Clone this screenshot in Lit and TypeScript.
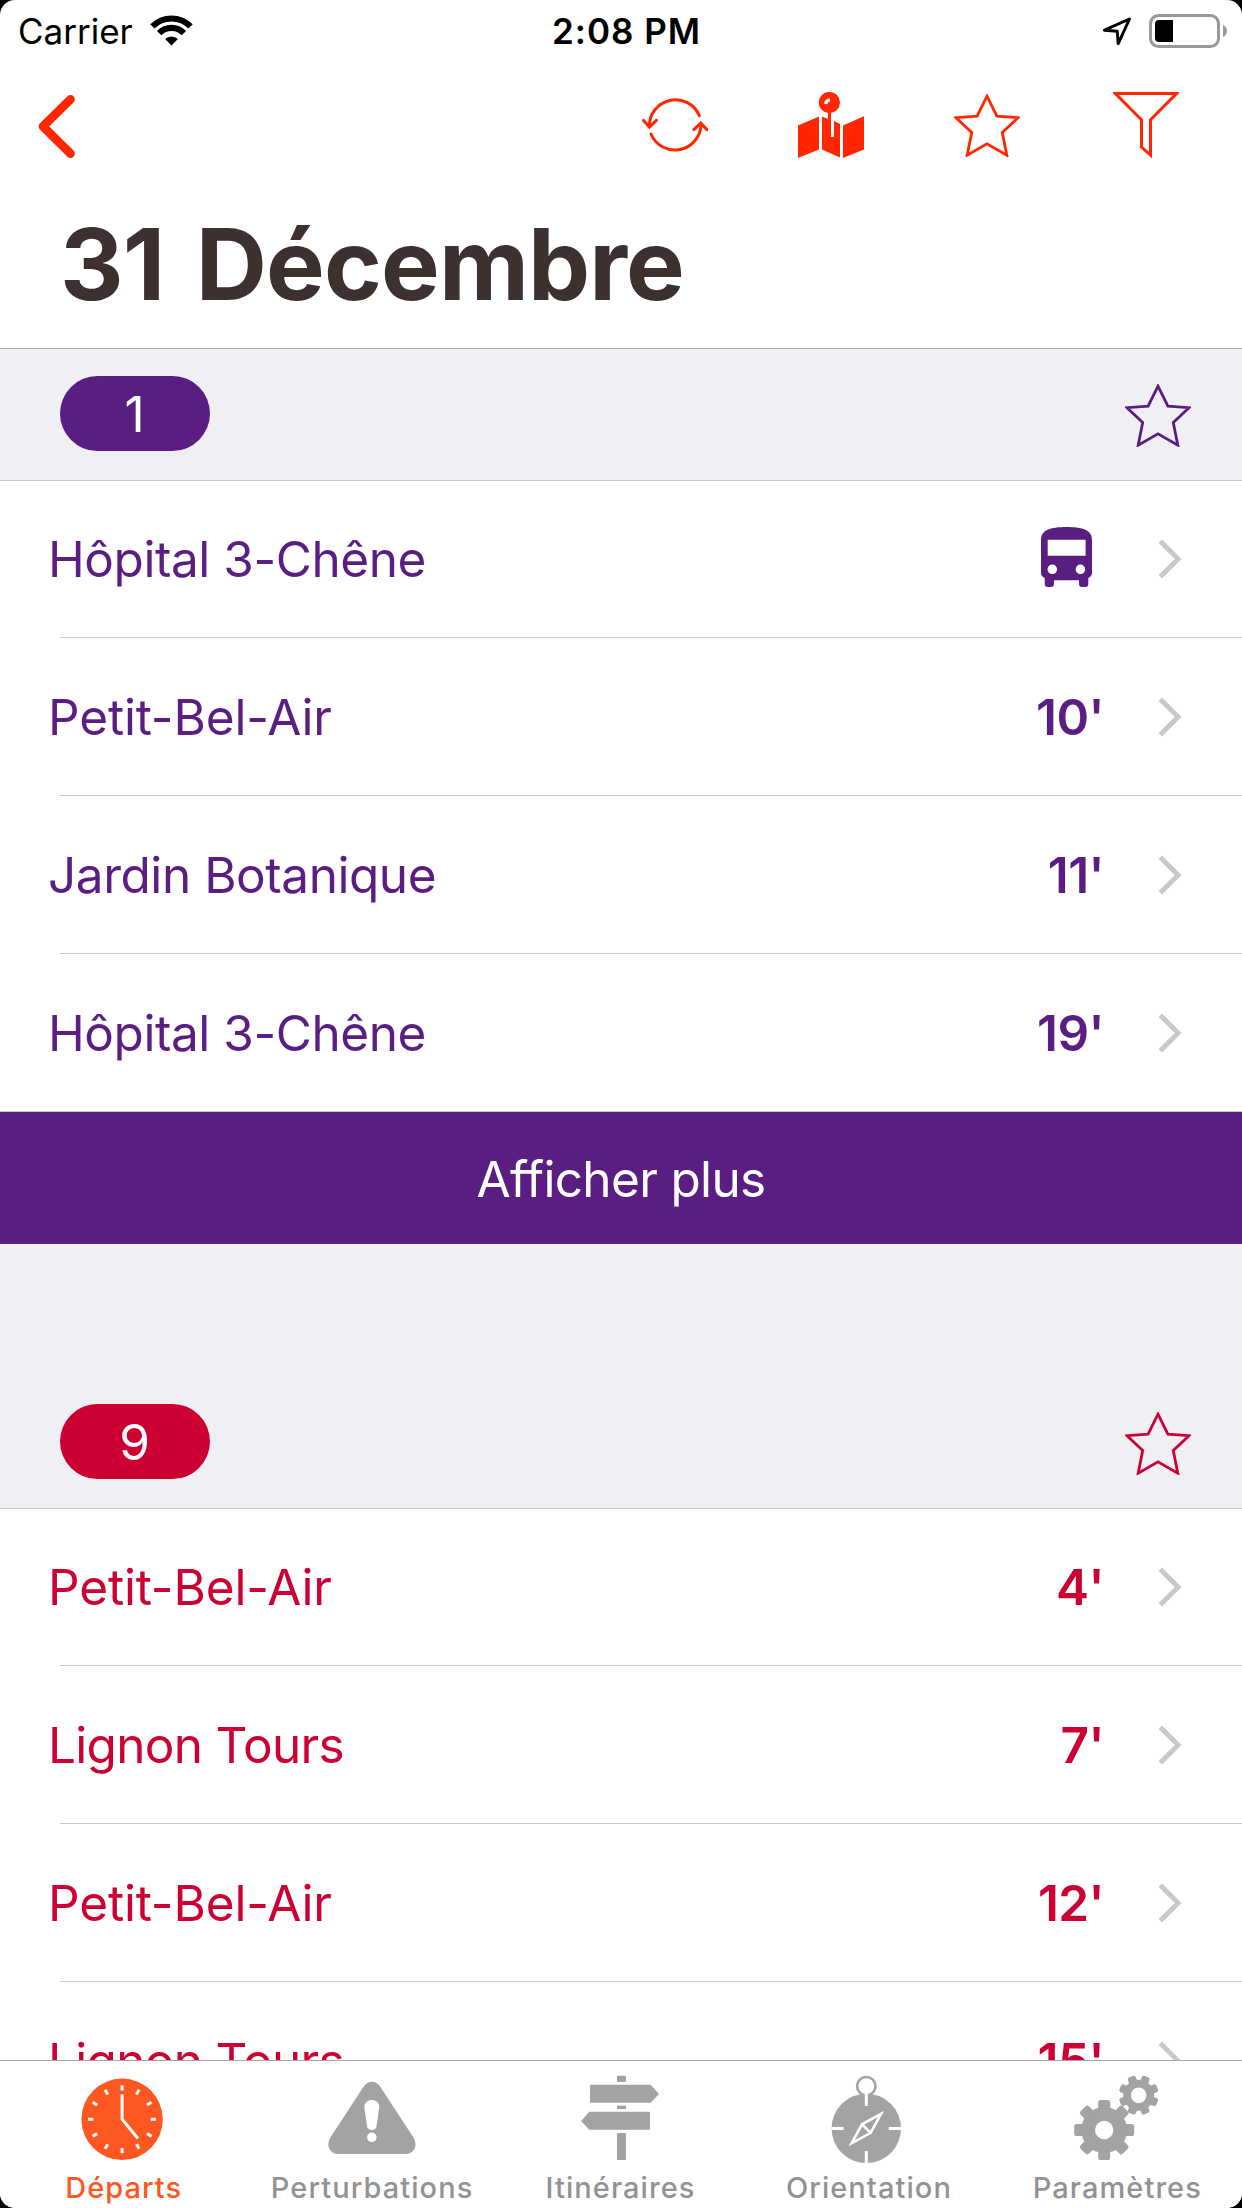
import { LitElement, html, svg, css, type TemplateResult } from "lit";
import { customElement, property } from "lit/decorators.js";
import { classMap } from "lit/directives/class-map.js";

interface Departure { to: string; in: string; fit: string; }
interface Line { number: string; tone: string; departures: Departure[]; more: boolean; }

const LINES: Line[] = [
  {
    number: "1",
    tone: "violet",
    more: true,
    departures: [
      { to: "Hôpital 3-Chêne", in: "", fit: "snug" },
      { to: "Petit-Bel-Air", in: "10'", fit: "loose" },
      { to: "Jardin Botanique", in: "11'", fit: "snug" },
      { to: "Hôpital 3-Chêne", in: "19'", fit: "snug" },
    ],
  },
  {
    number: "9",
    tone: "crimson",
    more: false,
    departures: [
      { to: "Petit-Bel-Air", in: "4'", fit: "loose" },
      { to: "Lignon Tours", in: "7'", fit: "tight" },
      { to: "Petit-Bel-Air", in: "12'", fit: "loose" },
      { to: "Lignon Tours", in: "15'", fit: "tight" },
    ],
  },
];

const star = html`<svg width="66" height="63" viewBox="0 0 66 63" fill="none" stroke="currentColor" stroke-width="2.8">
  <path d="M33 2.2L42.9 22.2L64 23.7L48.3 38.6L52.8 61.2L33 49.8L13.2 61.2L17.7 38.6L2 23.7L23.1 22.2Z"/></svg>`;

const gear = (cx: number, cy: number, body: number, outer: number, hole: number, tooth: number, turn: number) => svg`
  <g transform="translate(${cx} ${cy}) rotate(${turn})">
    ${[0, 45, 90, 135].map((a) => svg`<rect x=${-tooth / 2} y=${-outer} width=${tooth} height=${outer * 2} rx="2.6" transform="rotate(${a})"/>`)}
    <circle r=${body}/><circle r=${hole} fill="#fff"/>
  </g>`;

const TABS: { label: string; icon: TemplateResult<2> }[] = [
  {
    label: "Départs",
    icon: svg`<circle cx="43.1" cy="45.3" r="40.7"/>
      <g transform="translate(43.1 45.3)" fill="none" stroke="#fff" stroke-width="3">
        ${Array.from({ length: 12 }, (_, i) => svg`<path d="M0 -28.7V-34" transform="rotate(${i * 30})"/>`)}
        <path d="M0 -25V0L15.8 19.2"/></g>`,
  },
  {
    label: "Perturbations",
    icon: svg`<path d="M35 13.4Q38.6 7.7 43.9 7.7Q49.2 7.7 52.8 13.4L85.8 64Q89 70 86.2 75.2Q83.4 80 77.6 80H10.2Q4.4 80 1.6 75.2Q-1.2 70 2 64Z"/>
      <path fill="#fff" d="M36.3 33C36.3 23.7 51.3 23.7 51.3 33L48.4 53C47.8 57 39.8 57 39.2 53Z"/><circle cx="43.8" cy="63.3" r="4.8" fill="#fff"/>`,
  },
  {
    label: "Itinéraires",
    icon: svg`<g transform="translate(5 1.7)"><rect x="36" width="9" height="6.3" rx="1"/>
      <path d="M10 9H69.7L78 18.2L69.7 27H10Q9 27 9 26V10Q9 9 10 9Z"/><rect x="36" y="30" width="9" height="3.3"/>
      <path d="M68 36H8.3L0 45.2L8.3 54H68Q69 54 69 53V37Q69 36 68 36Z"/><rect x="36" y="57.3" width="9" height="27" rx="1"/></g>`,
  },
  {
    label: "Orientation",
    icon: svg`<g transform="translate(7.6 1.7)"><circle cx="34.7" cy="52.7" r="34.7"/>
      <circle cx="34.7" cy="10.5" r="9.2" fill="#fff" stroke="currentColor" stroke-width="2.6"/>
      <g fill="none" stroke="#fff" stroke-width="3"><path d="M34.7 16V30.3M0 52.9H12M57.2 52.9H70M34.7 75.3V88"/>
      <path d="M49.4 38.2L30.4 48.6L20 67.6L39 57.2ZM30.4 48.6L39 57.2" stroke-width="2.6"/></g></g>`,
  },
  {
    label: "Paramètres",
    icon: svg`<g transform="translate(1.2 1.7)">${gear(30, 54.3, 23, 30, 9.2, 12, 0)}${gear(64.5, 19.5, 15.4, 20, 7.8, 8.4, 22.5)}</g>`,
  },
];

@customElement("line-section")
export class LineSection extends LitElement {
  @property({ attribute: false }) line!: Line;

  static styles = css`
    :host { display: block; background: #efeff4; }
    .violet { --tone: #5a1e82; }
    .crimson { --tone: #cc0033; }
    .head { display: flex; align-items: flex-start; justify-content: space-between; height: 104px; padding: 0 51px 0 60px; color: var(--tone); }
    .pill { box-sizing: border-box; width: 150px; height: 75px; padding-right: 1px; line-height: 76px; border-radius: 38px; background: var(--tone); color: #fff; text-align: center; font-size: 49.5px; }
    .head svg { margin-top: 7.5px; display: block; }
    .row { display: flex; align-items: center; box-sizing: border-box; height: 158px; padding: 0 60px 0 48px; background: linear-gradient(#c8c7cc, #c8c7cc) 60px 100% / 100% 1px no-repeat #fff; color: var(--tone); }
    .row:first-child { box-shadow: inset 0 1px 0 #c8c7cc; }
    .row:last-child { background-position: 0 100%; }
    .to { flex: 1; font-size: 49.5px; }
    .loose { letter-spacing: -0.15px; }
    .snug { letter-spacing: -0.45px; }
    .tight { letter-spacing: -0.7px; }
    .in { font-size: 49.5px; font-weight: 600; letter-spacing: -0.6px; margin-right: 54px; }
    .bus { margin: 0 66px 4px 0; }
    .more { height: 132px; line-height: 134px; background: var(--tone); color: #fff; text-align: center; font-size: 49.5px; letter-spacing: -0.65px; }
  `;

  render() {
    const { number, tone, departures, more } = this.line;
    return html`<section class=${classMap({ [tone]: true })}>
      <div class="head"><div class="pill">${number}</div>${star}</div>
      <div>${departures.map((d) => html`<div class="row">
        <span class="to ${d.fit}">${d.to}</span>
        ${d.in
          ? html`<span class="in">${d.in}</span>`
          : html`<svg class="bus" width="51" height="60" viewBox="0 0 51 60" fill="currentColor">
              <path fill-rule="evenodd" d="M0 13C0 3 9 0 25.5 0S51 3 51 13V46Q51 49 47.3 51V57Q47.3 60 44.3 60H41Q38 60 38 57V53.2H13V57Q13 60 10 60H6.7Q3.7 60 3.7 57V51Q0 49 0 46ZM6.7 12.7V28.7H44.6V12.7ZM16.1 42.3A4.8 4.8 0 1 0 6.5 42.3A4.8 4.8 0 1 0 16.1 42.3ZM44.2 42.3A4.8 4.8 0 1 0 34.6 42.3A4.8 4.8 0 1 0 44.2 42.3Z"/></svg>`}
        <svg width="24" height="40" viewBox="0 0 24 40" fill="none" stroke="#c7c7cc" stroke-width="4.8"><path d="M2.3 2.2L20.2 20L2.3 37.8"/></svg>
      </div>`)}</div>
      ${more ? html`<div class="more">Afficher plus</div>` : ""}
    </section>`;
  }
}

@customElement("app-root")
export class AppRoot extends LitElement {
  static styles = css`
    :host { display: block; width: 1242px; height: 2208px; background: #000; font-family: Inter, "Liberation Sans", sans-serif; overflow: hidden; }
    .screen { display: flex; flex-direction: column; width: 1242px; height: 2208px; border-radius: 15px; overflow: hidden; background: #fff; }
    .status { display: grid; grid-template-columns: 1fr auto 1fr; align-items: center; height: 62px; padding: 0 14px 0 18px; color: #000; font-size: 35px; flex: none; box-sizing: border-box; }
    .carrier { display: flex; align-items: center; gap: 17px; }
    .carrier svg { margin-bottom: 2px; }
    .time { font-weight: 600; letter-spacing: 1px; padding-left: 7px; }
    .power { display: flex; justify-content: flex-end; align-items: center; gap: 17px; }
    .power svg { margin-bottom: 1px; }
    .nav { display: flex; align-items: center; height: 126px; flex: none; padding: 0 63px 0 36px; color: #ff2600; }
    .nav svg { display: block; }
    .tools { display: flex; margin-left: auto; gap: 90px; align-items: center; }
    .funnel { margin-left: 3px; }
    h1 { margin: 0; flex: none; height: 160px; box-sizing: border-box; padding: 0 0 8px 60px; line-height: 152px; font-size: 98.6px; font-weight: 700; letter-spacing: -0.9px; word-spacing: 9px; color: #3d3130; }
    .list { flex: 1; min-height: 0; overflow: hidden; border-top: 1px solid #a7a7aa; background: #efeff4; }
    .first { padding-top: 27px; }
    .second { padding-top: 160px; }
    .tabs { display: flex; flex: none; height: 147px; border-top: 1px solid #a7a7aa; background: #fff; }
    .tab { flex: 1; display: flex; flex-direction: column; align-items: center; padding-top: 13px; color: #929292; font-size: 29px; font-weight: 500; }
    .tab svg { display: block; fill: currentColor; color: #a3a3a3; }
    .tab.active, .tab.active svg { color: #ff5722; }
    .label { line-height: 36px; margin: 6px 1px 0 0; letter-spacing: 1.07px; }
  `;

  render() {
    return html`<div class="screen">
      <div class="status">
        <div class="carrier"><span>Carrier</span>
          <svg width="43" height="31" viewBox="0 0 43 31" fill="none" stroke="#000" stroke-width="6.2">
            <path d="M2.4 11.4A27 27 0 0 1 40.6 11.4"/><path d="M9.1 18.1A17.5 17.5 0 0 1 33.9 18.1"/><path stroke="none" fill="#000" d="M21.5 30.5L15.1 24.1A9 9 0 0 1 27.9 24.1Z"/></svg></div>
        <div class="time">2:08 PM</div>
        <div class="power">
          <svg width="30" height="30" viewBox="0 0 30 30" fill="none" stroke="#000" stroke-width="3" stroke-linejoin="round"><path d="M27.5 3L2.5 14.2L15.2 15.2L16.2 27.7Z"/></svg>
          <svg width="79" height="34" viewBox="0 0 79 34"><rect x="1.5" y="1.5" width="68" height="31" rx="8" fill="none" stroke="#999" stroke-width="3"/><path d="M10 6H24V28H10Q6 28 6 24V10Q6 6 10 6Z"/><path fill="#999" d="M74 11Q78 13 78 17T74 23Z"/></svg>
        </div>
      </div>
      <nav class="nav">
        <svg width="42" height="66" viewBox="0 0 42 66" fill="none" stroke="currentColor" stroke-width="8.7" stroke-linecap="round" stroke-linejoin="round"><path d="M34.5 7.3L7 34.4L34.5 61.6"/></svg>
        <div class="tools">
          <svg width="66" height="66" viewBox="0 0 66 66" fill="none" stroke="currentColor" stroke-width="3" stroke-linecap="round"><path d="M57.3 23.6A26 26 0 0 0 7.4 34.5M1.4 28.3L7.4 35L14.4 28.3M9 42A26 26 0 0 0 59 32M51.8 37.6L58.8 31.2L65 37.6"/></svg>
          <svg width="66" height="66" viewBox="0 0 66 66" fill="currentColor"><path d="M0 33.6L21 24.4V57.4L0 66ZM24 24.4L30 27V19H33V45H36V29L42 32V65.6L24 57.6ZM45 33.4L66 24.2V57.6L45 66Z"/><circle cx="31.4" cy="10.6" r="10.6"/><path d="M32 7.8Q28 8.3 27.6 12" fill="none" stroke="#fff" stroke-width="3.2"/></svg>
          ${star}
          <svg class="funnel" width="66" height="66" viewBox="0 0 66 66" fill="none" stroke="currentColor" stroke-width="3"><path d="M2.5 1.6H63.5L37.5 27.8V63L28.5 55V27.8Z"/></svg>
        </div>
      </nav>
      <h1>31 Décembre</h1>
      <main class="list">
        ${LINES.map((line, i) => html`<line-section class=${i ? "second" : "first"} .line=${line}></line-section>`)}
      </main>
      <footer class="tabs">
        ${TABS.map((t, i) => html`<div class=${classMap({ tab: true, active: i === 0 })}><svg width="90" height="90" viewBox="0 0 90 90">${t.icon}</svg><span class="label">${t.label}</span></div>`)}
      </footer>
    </div>`;
  }
}
